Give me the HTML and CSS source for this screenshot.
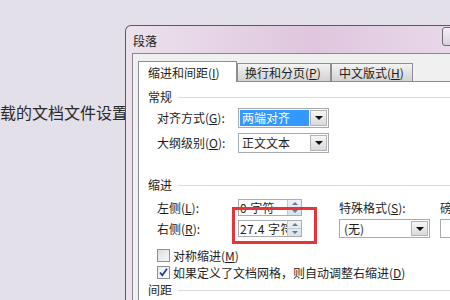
FILE: index.html
```html
<!DOCTYPE html>
<html lang="zh-CN">
<head>
  <meta charset="UTF-8" />
  <title>段落</title>
  <link rel="stylesheet" href="styles.css">
</head>
<body>
  <div class="page">
    <div class="doc-text">载的文档文件设置</div>

    <div class="dialog">
      <div class="titlebar">
        <span class="title">段落</span>
        <span class="help-btn"></span>
      </div>
      <div class="frame">
        <div class="client">
          <div class="tabs">
            <div class="tab tab-1 active">缩进和间距(<u>I</u>)</div>
            <div class="tab tab-2">换行和分页(<u>P</u>)</div>
            <div class="tab tab-3">中文版式(<u>H</u>)</div>
          </div>

          <div class="panel">
            <div class="group-title">常规</div>
            <div class="field-row first">
              <label>对齐方式(<u>G</u>):</label>
              <div class="combo"><span class="value selected">两端对齐</span><span class="drop"></span></div>
            </div>
            <div class="field-row">
              <label>大纲级别(<u>O</u>):</label>
              <div class="combo"><span class="value">正文文本</span><span class="drop"></span></div>
            </div>

            <div class="group-title indent-title">缩进</div>
            <div class="indent">
              <div class="indent-left">
                <div class="spin-row">
                  <label>左侧(<u>L</u>):</label>
                  <div class="spin"><span class="spin-text">0 字符</span><span class="spin-btns"><i class="up"></i><i class="down"></i></span></div>
                </div>
                <div class="spin-row">
                  <label>右侧(<u>R</u>):</label>
                  <div class="spin"><span class="spin-text">27.4 字符</span><span class="spin-btns"><i class="up"></i><i class="down"></i></span></div>
                </div>
              </div>
              <div class="indent-col special">
                <div class="col-label">特殊格式(<u>S</u>):</div>
                <div class="combo"><span class="value">(无)</span><span class="drop"></span></div>
              </div>
              <div class="indent-col amount">
                <div class="col-label">磅值(<u>Y</u>):</div>
                <div class="combo blank"></div>
              </div>
            </div>

            <div class="check-row first">
              <span class="box"></span>
              <span>对称缩进(<u>M</u>)</span>
            </div>
            <div class="check-row">
              <span class="box checked">
                <svg width="11" height="11" viewBox="0 0 11 11"><path d="M2 5.5 L4.3 8.3 L9 1.8" fill="none" stroke="#243f8f" stroke-width="1.8"/></svg>
              </span>
              <span>如果定义了文档网格，则自动调整右缩进(<u>D</u>)</span>
            </div>

            <div class="group-title spacing-title">间距</div>
          </div>
        </div>
      </div>
    </div>
  </div>

  <div class="mark"></div>
</body>
</html>
```

FILE: styles.css
```css
* { box-sizing: border-box; }
body { margin: 0; width: 450px; height: 300px; overflow: hidden; background: #e4e0ea; font-family: "Noto Sans CJK SC", sans-serif; font-size: 12px; color: #1e1e1e; }
u { text-decoration: underline; }
.page { display: flex; height: 300px; }

.doc-text { width: 125px; flex-shrink: 0; padding-top: 102px; font-size: 16px; line-height: 20px; color: #2a2a2a; white-space: nowrap; }

.dialog { flex-shrink: 0; width: 340px; height: 275px; margin-top: 25px; display: flex; flex-direction: column; border: 1px solid #5c5862; border-bottom: none; border-radius: 6px 6px 0 0; background: linear-gradient(90deg, #ece2ec, #dfc6de 55%, #e9daea); position: relative; z-index: 1; }
.titlebar { height: 27px; flex-shrink: 0; display: flex; align-items: flex-start; padding: 7px 0 0 7px; }
.title { line-height: 16px; color: #222; }
.help-btn { margin: -6px 2px 0 auto; width: 20px; height: 19px; border: 1px solid #6d6a75; border-radius: 3px; background: linear-gradient(#f3eff5, #d8d2de); }

.frame { flex: 1; display: flex; padding-left: 6px; }
.client { flex: 1; display: flex; flex-direction: column; border-left: 1px solid #8e8593; border-top: 1px solid #8e8593; background: #f0f0f0; padding: 7px 0 0 5px; }

.tabs { height: 20px; display: flex; align-items: flex-end; }
.tab { height: 18px; padding: 1px 0 0 7px; line-height: 16px; border: 1px solid #8c8e94; border-bottom: none; background: linear-gradient(#f4f4f4, #e2e2e2 50%, #d3d3d3); white-space: nowrap; }
.tab.active { height: 21px; margin-bottom: -1px; padding-top: 3px; background: #fff; position: relative; z-index: 2; }
.tab-1 { width: 99px; padding-left: 9px; }
.tab-2 { width: 94px; }
.tab-3 { width: 82px; }

.panel { flex: 1; border: 1px solid #898c95; border-bottom: none; background: #fff; padding: 7px 0 0 9px; }

.group-title { display: flex; align-items: center; gap: 6px; height: 16px; line-height: 16px; }
.group-title::after { content: ""; flex: 1; height: 1px; background: #d6dbe0; }
.indent-title { margin-top: 24px; }
.spacing-title { margin-top: 2px; }

.field-row { display: flex; align-items: center; height: 20px; padding-left: 9px; margin-top: 5px; }
.field-row.first { margin-top: 3px; }
.field-row label, .spin-row label { width: 81px; line-height: 16px; }

.combo { width: 91px; height: 20px; display: flex; padding: 1px; border: 1px solid #a6abb2; background: #fff; }
.combo .value { flex: 1; line-height: 16px; padding-left: 2px; white-space: nowrap; }
.combo .value.selected { background: #3399ff; color: #fff; margin-right: 1px; }
.combo .drop { width: 17px; display: flex; align-items: center; justify-content: center; border: 1px solid #b3b3b3; background: linear-gradient(#f6f6f6, #dadada); }
.combo .drop::after { content: ""; border-top: 4px solid #111; border-left: 4px solid transparent; border-right: 4px solid transparent; }

.indent { display: flex; margin-top: 6px; padding-left: 9px; }
.indent-left { width: 145px; display: flex; flex-direction: column; gap: 4px; }
.spin-row { display: flex; align-items: center; height: 17px; }
.spin { width: 64px; height: 17px; display: flex; border: 1px solid #abadb3; background: #fff; }
.spin-text { flex: 1; overflow: hidden; white-space: nowrap; line-height: 15px; padding-left: 1px; letter-spacing: 0.4px; }
.spin-btns { width: 14px; display: flex; flex-direction: column; border-left: 1px solid #c3c9d0; background: linear-gradient(#eef2f6, #d9e1ea); }
.spin-btns i { flex: 1; display: flex; align-items: center; justify-content: center; }
.spin-btns .up { border-bottom: 1px solid #c3c9d0; }
.spin-btns .up::after { content: ""; border-bottom: 3px solid #6b7a8c; border-left: 3px solid transparent; border-right: 3px solid transparent; }
.spin-btns .down::after { content: ""; border-top: 3px solid #6b7a8c; border-left: 3px solid transparent; border-right: 3px solid transparent; }

.indent-col { display: flex; flex-direction: column; }
.col-label { height: 17px; line-height: 17px; white-space: nowrap; }
.indent-col .combo { margin-top: 3px; height: 19px; }
.special { width: 91px; margin-left: 37px; }
.special .combo .value { padding-left: 3px; }
.amount { margin-left: 10px; }
.amount .combo { width: 60px; }

.check-row { display: flex; align-items: center; gap: 3px; height: 15px; padding-left: 9px; margin-top: 2px; line-height: 15px; white-space: nowrap; }
.check-row.first { margin-top: 10px; }
.box { width: 13px; height: 13px; flex-shrink: 0; display: flex; align-items: center; justify-content: center; border: 1px solid #8f8f8f; background: linear-gradient(135deg, #dedede, #f7f7f7); }
.box.checked { background: linear-gradient(135deg, #e8ecf2, #fbfbfd); }

.mark { position: absolute; left: 232px; top: 207px; width: 85px; height: 37px; border: 3px solid #e5353a; z-index: 5; }
```
